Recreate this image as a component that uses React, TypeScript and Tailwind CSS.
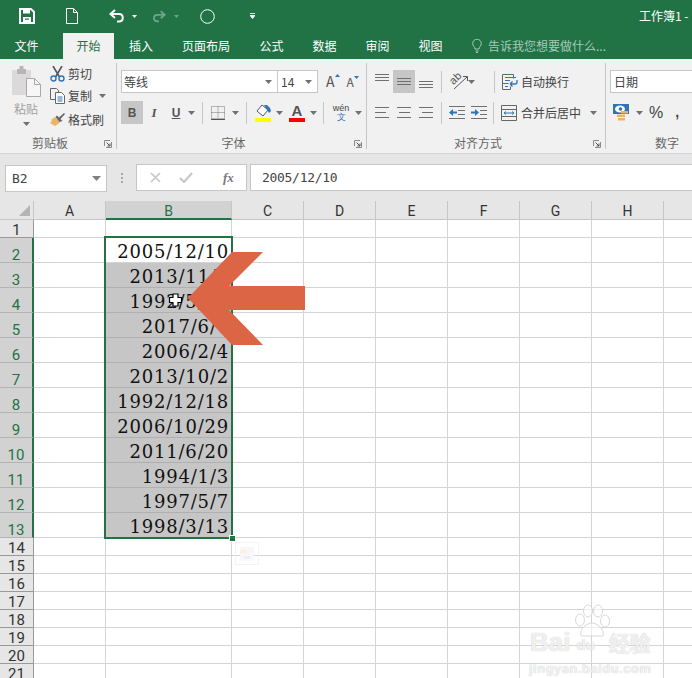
const UI = "font-['Noto_Sans_CJK_SC',sans-serif]";

const rows: { n: number; h: string; date?: string }[] = [
  { n: 1, h: "h-[18px]" },
  { n: 2, h: "h-[25px]", date: "2005/12/10" },
  { n: 3, h: "h-[25px]", date: "2013/11/5" },
  { n: 4, h: "h-[25px]", date: "1992/5/16" },
  { n: 5, h: "h-[25px]", date: "2017/6/7" },
  { n: 6, h: "h-[25px]", date: "2006/2/4" },
  { n: 7, h: "h-[25px]", date: "2013/10/2" },
  { n: 8, h: "h-[25px]", date: "1992/12/18" },
  { n: 9, h: "h-[25px]", date: "2006/10/29" },
  { n: 10, h: "h-[25px]", date: "2011/6/20" },
  { n: 11, h: "h-[25px]", date: "1994/1/3" },
  { n: 12, h: "h-[25px]", date: "1997/5/7" },
  { n: 13, h: "h-[25px]", date: "1998/3/13" },
  ...[14, 15, 16, 17, 18, 19, 20, 21].map((n) => ({ n, h: "h-[18px]" })),
];

// the I column starts on screen but its letter is past the window edge
const otherCols = ["C", "D", "E", "F", "G", "H", ""];

function Caret({ className = "" }: { className?: string }) {
  return (
    <svg width="7" height="4" viewBox="0 0 7 4" className={`shrink-0 ${className}`}>
      <path d="M0 0h7L3.5 4z" fill="#707070" />
    </svg>
  );
}

function Sep({ className = "" }: { className?: string }) {
  return <div className={`w-px h-[22px] shrink-0 bg-[#c6c6c6] ${className}`} />;
}

function GroupLabel({ children, launcher = true }: { children: string; launcher?: boolean }) {
  return (
    <div className={`relative h-[19px] mt-auto mb-[-3px] flex items-center justify-center text-[12px] text-[#666] ${launcher ? "pr-[16px]" : ""}`}>
      {children}
      {launcher && (
        <svg width="8" height="8" viewBox="0 0 8 8" className="absolute right-[4px] top-[7px]">
          <path d="M.5 6V.5H6M7.5 2v5.500H2" stroke="#8a8a8a" fill="none" />
          <path d="M2.500 2.500L6 6M6 3.500V6H3.500" stroke="#555" fill="none" />
        </svg>
      )}
    </div>
  );
}

function LeftAlign({ offset }: { offset: number[] }) {
  return (
    <svg width="15" height="13" viewBox="0 0 15 13">
      <path d={`M${offset[0]} 1.5h14M${offset[1]} 6.5h11M${offset[0]} 11.5h14`} stroke="#707070" />
    </svg>
  );
}

function AlignLines() {
  return (
    <svg width="14" height="7" viewBox="0 0 14 7">
      <path d="M0 .5h14M0 3.500h14M0 6.500h14" stroke="#707070" />
    </svg>
  );
}

function QatBar() {
  return (
    <div className="h-[32px] flex items-center text-white">
      <svg width="16" height="16" viewBox="0 0 16 16" className="ml-[19px]">
        <path d="M1 1h11l3 3v11H1z" fill="none" stroke="#fff" strokeWidth="2" />
        <path d="M4 1h7v4.500H4z" fill="#fff" />
        <path d="M4 9h8v6H4z" fill="#fff" />
        <path d="M6 10.500h4v1.200H6z" fill="#217346" />
      </svg>
      <svg width="12" height="16" viewBox="0 0 12 16" className="ml-[31px]">
        <path d="M.5.500h7l4 4v11H.5zM7.500.500v4h4" fill="none" stroke="#fff" />
      </svg>
      <svg width="16" height="14" viewBox="0 0 16 14" className="ml-[31px]">
        <path d="M6 1L1.500 5 6 9" fill="none" stroke="#fff" strokeWidth="2" />
        <path d="M2 5h8c5 0 5 7.500 0 7.500H8" fill="none" stroke="#fff" strokeWidth="2" />
      </svg>
      <svg width="5" height="3" viewBox="0 0 5 3" className="ml-[7px] mt-[1px]">
        <path d="M0 0h5L2.500 3z" fill="#fff" />
      </svg>
      <svg width="14" height="13" viewBox="0 0 16 14" className="ml-[15px]">
        <path d="M10 1l4.500 4L10 9" fill="none" stroke="#6fa58b" strokeWidth="2" />
        <path d="M14 5H6c-5 0-5 7.500 0 7.500h2" fill="none" stroke="#6fa58b" strokeWidth="2" />
      </svg>
      <svg width="5" height="3" viewBox="0 0 5 3" className="ml-[8px] mt-[1px]">
        <path d="M0 0h5L2.500 3z" fill="#6fa58b" />
      </svg>
      <svg width="15" height="15" viewBox="0 0 15 15" className="ml-[21px]">
        <circle cx="7.500" cy="7.500" r="6.800" fill="none" stroke="#fff" />
      </svg>
      <svg width="5" height="6" viewBox="0 0 5 6" className="ml-[35px]">
        <path d="M0 .5h5M0 2.500h5L2.500 5.500z" stroke="#fff" strokeWidth=".8" fill="#fff" />
      </svg>
      <span className="ml-[384px] text-[12px] whitespace-nowrap">工作簿1 -</span>
    </div>
  );
}

function Tabs() {
  const tabs = [
    ["文件", "w-[63px] pr-[10px]"],
    ["开始", "w-[51px]"],
    ["插入", "w-[54px]"],
    ["页面布局", "w-[76px]"],
    ["公式", "w-[55px]"],
    ["数据", "w-[51px]"],
    ["审阅", "w-[55px]"],
    ["视图", "w-[51px]"],
  ];
  return (
    <div className="h-[27px] flex text-[12px] text-white">
      {tabs.map(([t, w]) => (
        <div
          key={t}
          className={`${w} flex items-center justify-center ${t === "开始" ? "bg-[#f1f1f1] text-[#217346] mt-px" : ""}`}
        >
          {t}
        </div>
      ))}
      <div className="flex items-center ml-[16px] text-[#a6c9b7]">
        <svg width="10" height="14" viewBox="0 0 10 14" className="mr-[6px]">
          <path d="M3 10C3 8 .7 7 .7 4.500a4.300 4.300 0 018.600 0C9.300 7 7 8 7 10z" fill="none" stroke="#a6c9b7" />
          <path d="M3.500 12h3M4 13.500h2" stroke="#a6c9b7" />
        </svg>
        告诉我您想要做什么...
      </div>
    </div>
  );
}

function Clipboard() {
  return (
    <div className="w-[117px] shrink-0 border-r border-[#c6c6c6] flex flex-col my-[4px]">
      <div className="flex">
        <div className="w-[54px] flex flex-col items-center pt-[3px] text-[12px] text-[#a0a0a0] -ml-[1px] -mr-[3px]">
          <svg width="29" height="31" viewBox="0 0 29 31">
            <path d="M1 4h17a1 1 0 011 1v23a1 1 0 01-1 1H1a1 1 0 01-1-1V5a1 1 0 011-1z" fill="#dcd9da" />
            <path d="M5 3h9v5H5z" fill="#b8b5b6" />
            <path d="M7.500 0h4v4h-4z" fill="#b8b5b6" />
            <path d="M14.500 12.500h8l6 6v12h-14z" fill="#f6f6f6" stroke="#a8a8a8" />
            <path d="M22.500 12.500v6h6" fill="none" stroke="#a8a8a8" />
          </svg>
          <span className="mt-[3px] leading-[17px]">粘贴</span>
          <Caret className="mt-[5px]" />
        </div>
        <div className="flex flex-col text-[12px] text-[#444]">
          <div className="h-[21px] flex items-center">
            <svg width="15" height="16" viewBox="0 0 15 16" className="mr-[3px]">
              <path d="M3 0l6.500 11M12 0L5.500 11" stroke="#555" strokeWidth="1.600" />
              <circle cx="3.500" cy="12.500" r="2.500" fill="none" stroke="#2f75b5" strokeWidth="1.400" />
              <circle cx="11.500" cy="12.500" r="2.500" fill="none" stroke="#2f75b5" strokeWidth="1.400" />
            </svg>
            剪切
          </div>
          <div className="h-[24px] flex items-center">
            <svg width="15" height="16" viewBox="0 0 15 16" className="mr-[3px]">
              <path d="M.5.500h6l2 2v9h-8z" fill="#f1f1f1" stroke="#666" />
              <path d="M5.500 4.500h6l3 3v8h-9z" fill="#fff" stroke="#666" />
              <path d="M7.500 9h5M7.500 11h5M7.500 13h5" stroke="#2f75b5" />
            </svg>
            复制
            <Caret className="ml-[7px]" />
          </div>
          <div className="h-[23px] flex items-center">
            <svg width="15" height="14" viewBox="0 0 15 14" className="mr-[3px]">
              <path d="M5 4l5 5-2 2-3 2-5-3 1-1 1-1-1-1z" fill="#e8b567" />
              <path d="M5.500 4L7 2.500l2 2L14 0l1 1-4.500 5 2 2L9.500 9z" fill="#666" />
            </svg>
            格式刷
          </div>
        </div>
      </div>
      <GroupLabel>剪贴板</GroupLabel>
    </div>
  );
}

function FontGroup() {
  return (
    <div className="w-[250px] shrink-0 border-r border-[#c6c6c6] flex flex-col my-[4px]">
      <div className="flex items-center pl-[4px] mt-[7px] h-[23px]">
        <div className="w-[157px] h-[23px] bg-white border border-[#c6c6c6] flex items-center justify-between pl-[2px] pr-[5px] text-[12px] text-[#444]">
          等线
          <Caret />
        </div>
        <div className="w-[40px] h-[23px] bg-white border border-l-0 border-[#c6c6c6] flex items-center justify-between pl-[3px] pr-[5px] text-[12px] text-[#444]">
          14
          <Caret />
        </div>
        <span className="ml-[8px] text-[14px] text-[#555] relative">
          A
          <svg width="5" height="3" viewBox="0 0 5 3" className="absolute -right-[5px] top-[3px]">
            <path d="M0 3L2.500 0 5 3z" fill="#2f75b5" />
          </svg>
        </span>
        <span className="ml-[12px] text-[12px] text-[#555] relative">
          A
          <svg width="5" height="3" viewBox="0 0 5 3" className="absolute -right-[5px] top-[3px]">
            <path d="M0 0h5L2.500 3z" fill="#2f75b5" />
          </svg>
        </span>
      </div>
      <div className="flex items-center pl-[4px] mt-[8px] h-[23px] text-[#555]">
        <div className="w-[22px] h-[23px] bg-[#c6c6c6] flex items-center justify-center font-['Liberation_Sans'] font-bold text-[12px]">B</div>
        <div className="w-[22px] flex justify-center font-['Liberation_Serif'] italic font-bold text-[13px]">I</div>
        <div className="w-[22px] flex justify-center font-['Liberation_Sans'] font-bold text-[12px] underline">U</div>
        <Caret className="ml-[1px]" />
        <Sep className="ml-[7px]" />
        <svg width="14" height="14" viewBox="0 0 14 14" className="ml-[8px]">
          <path d="M.5.500h13v12h-13zM7 .5v12M.5 6.500h13" fill="none" stroke="#777" strokeDasharray="1 1" />
          <path d="M0 13.500h14" stroke="#555" />
        </svg>
        <Caret className="ml-[7px]" />
        <Sep className="ml-[7px]" />
        <svg width="16" height="18" viewBox="0 0 16 18" className="ml-[8px]">
          <path d="M2 7l5-6 6 5-5 6z" fill="#fff" stroke="#555" />
          <path d="M9 1h3l3 3 1 3-2 2z" fill="#2f75b5" />
          <path d="M0 14h16v4H0z" fill="#ffff00" />
        </svg>
        <Caret className="ml-[5px]" />
        <div className="ml-[6px] w-[16px] h-[18px] flex flex-col items-center">
          <span className="text-[15px] leading-[14px] font-bold font-['Liberation_Sans'] text-[#555]">A</span>
          <div className="w-[16px] h-[4px] bg-[#ff0000]" />
        </div>
        <Caret className="ml-[5px]" />
        <Sep className="ml-[6px]" />
        <div className="ml-[8px] w-[18px] flex flex-col items-center font-['Liberation_Sans'] leading-[9px] text-[9px] text-[#444]">
          wén
          <span className="text-[9px] text-[#2f75b5]">文</span>
        </div>
        <Caret className="ml-[5px]" />
      </div>
      <GroupLabel>字体</GroupLabel>
    </div>
  );
}

function AlignGroup() {
  return (
    <div className="w-[239px] shrink-0 border-r border-[#c6c6c6] flex flex-col my-[4px]">
      <div className="flex items-center pl-[4px] mt-[7px] h-[23px]">
        <div className="w-[22px] h-[23px] flex justify-center pt-[4px]">
          <AlignLines />
        </div>
        <div className="w-[22px] h-[23px] bg-[#c6c6c6] flex justify-center items-center">
          <AlignLines />
        </div>
        <div className="w-[22px] h-[23px] flex justify-center pt-[11px]">
          <AlignLines />
        </div>
        <Sep className="ml-[4px]" />
        <div className="relative ml-[7px] w-[19px] h-[16px] shrink-0">
          <span className="absolute left-[0px] -top-[3px] -rotate-45 font-['Liberation_Sans'] text-[11px] leading-[14px] text-[#555]">ab</span>
          <svg width="19" height="16" viewBox="0 0 19 16" className="absolute left-0 top-0">
            <path d="M5 15L18 3M14 2.500h4.500V7" fill="none" stroke="#555" />
          </svg>
        </div>
        <Caret />
        <Sep className="ml-[19px]" />
        <svg width="16" height="16" viewBox="0 0 16 16" className="ml-[7px]">
          <path d="M.5.500h11v4M.5.500v15h8v-3M.5 9.500h6" fill="none" stroke="#666" />
          <path d="M3 3.500h11M3 6.500h5M3 12.500h3" fill="none" stroke="#2f75b5" />
          <path d="M8 10h5a2 2 0 002-2V6M8 10l2.500-2.500M8 10l2.500 2.500" fill="none" stroke="#2f75b5" strokeWidth="1.300" />
        </svg>
        <span className="ml-[3px] text-[12px] text-[#444] whitespace-nowrap">自动换行</span>
      </div>
      <div className="flex items-center pl-[4px] mt-[8px] h-[23px]">
        <div className="w-[22px] flex justify-center">
          <LeftAlign offset={[0, 0]} />
        </div>
        <div className="w-[22px] flex justify-center">
          <LeftAlign offset={[0, 2]} />
        </div>
        <div className="w-[22px] flex justify-center">
          <LeftAlign offset={[0, 3]} />
        </div>
        <Sep className="ml-[4px]" />
        <svg width="16" height="13" viewBox="0 0 16 13" className="ml-[7px]">
          <path d="M0 .5h16M9 4.500h7M9 8.500h7M0 12.500h16" stroke="#707070" />
          <path d="M0 6.500l4-3.500v2.500h4v2H4V10z" fill="#2f75b5" />
        </svg>
        <svg width="16" height="13" viewBox="0 0 16 13" className="ml-[6px]">
          <path d="M0 .5h16M9 4.500h7M9 8.500h7M0 12.500h16" stroke="#707070" />
          <path d="M8 6.500L4 3v2.500H0v2h4V10z" fill="#2f75b5" />
        </svg>
        <Sep className="ml-[6px]" />
        <svg width="16" height="16" viewBox="0 0 16 16" className="ml-[7px]">
          <path d="M.5.500h15v15H.5zM.5 4.500h15M.5 11.500h15" fill="none" stroke="#666" />
          <path d="M3 8h10M3 8l2-1.500M3 8l2 1.500M13 8l-2-1.500M13 8l-2 1.500" stroke="#2f75b5" fill="none" />
        </svg>
        <span className="ml-[4px] text-[12px] text-[#444] whitespace-nowrap">合并后居中</span>
        <Caret className="ml-[9px]" />
      </div>
      <GroupLabel>对齐方式</GroupLabel>
    </div>
  );
}

function NumberGroup() {
  return (
    <div className="w-[122px] shrink-0 flex flex-col my-[4px]">
      <div className="pl-[4px] mt-[7px] h-[23px]">
        <div className="w-[118px] h-[23px] bg-white border border-[#c6c6c6] flex items-center pl-[3px] text-[12px] text-[#444]">日期</div>
      </div>
      <div className="flex items-center pl-[7px] mt-[8px] h-[23px]">
        <svg width="17" height="17" viewBox="0 0 17 17">
          <path d="M0 0h16v10H0z" fill="#2f75b5" />
          <ellipse cx="7" cy="5" rx="5" ry="3.500" fill="#fff" />
          <circle cx="7.500" cy="5" r="1.800" fill="#2f75b5" />
          <path d="M8 7h7v2.500H8zM4 10.500h8V13H4zM5 14h7v2.500H5z" fill="#e8b567" />
        </svg>
        <Caret className="ml-[6px]" />
        <span className="ml-[6px] text-[16px] font-['Liberation_Sans'] text-[#444]">%</span>
        <span className="ml-[12px] text-[14px] font-['Liberation_Sans'] font-bold text-[#444]">,</span>
      </div>
      <GroupLabel launcher={false}>数字</GroupLabel>
    </div>
  );
}

function FormulaBar() {
  return (
    <div className="h-[48px] bg-[#e6e6e6] border-t border-[#d4d4d4] flex pt-[11px] pl-[5px]">
      <div className="w-[102px] h-[27px] bg-white border border-[#c6c6c6] flex items-center justify-between pl-[6px] pr-[5px] text-[13px] text-[#444] font-['DejaVu_Sans_Mono',monospace]">
        B2
        <svg width="9" height="5" viewBox="0 0 9 5">
          <path d="M0 0h9L4.500 5z" fill="#808080" />
        </svg>
      </div>
      <div className="w-[2px] h-[10px] mt-[8px] ml-[14px] border-l-2 border-dotted border-[#a8a8a8]" />
      <div className="ml-[13px] w-[111px] h-[27px] bg-white border border-[#c6c6c6] flex items-center -mt-px">
        <svg width="11" height="11" viewBox="0 0 11 11" className="ml-[13px]">
          <path d="M1 1l9 9M10 1l-9 9" stroke="#c6c6c6" strokeWidth="1.600" />
        </svg>
        <svg width="14" height="11" viewBox="0 0 14 11" className="ml-[18px]">
          <path d="M1 6l4 4 8-9" fill="none" stroke="#c6c6c6" strokeWidth="2" />
        </svg>
        <span className="ml-[30px] font-['Liberation_Serif'] italic font-bold text-[13px] text-[#777]">fx</span>
      </div>
      <div className="ml-[3px] flex-1 h-[27px] bg-white border border-r-0 border-[#c6c6c6] flex items-center pl-[11px] text-[13px] text-[#444] font-['DejaVu_Sans_Mono',monospace] tracking-[-0.3px] -mt-px">
        2005/12/10
      </div>
    </div>
  );
}

function Sheet() {
  return (
    <div className="relative flex-1 overflow-hidden bg-white font-['Roboto',sans-serif]">
      <div className="flex h-[19px] bg-[#e6e6e6] text-[14px] text-[#333]">
        <div className="w-[34px] shrink-0 border-r border-b border-[#c6c6c6] flex items-end justify-end">
          <svg width="11" height="11" viewBox="0 0 11 11" className="mr-[3px] mb-[3px]">
            <path d="M11 0v11H0z" fill="#b4b4b4" />
          </svg>
        </div>
        <div className="w-[72px] shrink-0 border-r border-b border-[#c6c6c6] flex items-center justify-center pt-[3px]">A</div>
        <div className="w-[126px] shrink-0 bg-[#d2d2d2] border-r border-[#c6c6c6] border-b-2 border-b-[#217346] text-[#217346] flex items-center justify-center pt-[3px]">B</div>
        {otherCols.map((c) => (
          <div key={c} className="w-[72px] shrink-0 border-r border-b border-[#c6c6c6] flex items-center justify-center pt-[3px]">{c}</div>
        ))}
      </div>
      {rows.map((r) => {
        const picked = r.n >= 2 && r.n <= 13;
        return (
          <div key={r.n} className={`flex ${r.h}`}>
            <div
              className={`w-[34px] shrink-0 flex items-end justify-center text-[15px] leading-[14px] border-b ${
                picked
                  ? "bg-[#d2d2d2] text-[#217346] border-r-2 border-r-[#217346] border-b-[#b4b4b4]"
                  : "bg-[#e6e6e6] text-[#333] border-r border-r-[#9a9a9a] border-b-[#9a9a9a]"
              }`}
            >
              {r.n}
            </div>
            <div className="w-[72px] shrink-0 border-r border-b border-[#d4d4d4]" />
            <div
              className={`w-[126px] shrink-0 border-r border-b flex items-center justify-end pr-[2px] pt-[2px] font-['DejaVu_Serif',serif] text-[18px] tracking-[0.8px] text-[#111] ${
                picked && r.n > 2 ? "bg-[#c6c6c6] border-[#b0b0b0]" : "border-[#d4d4d4]"
              }`}
            >
              {r.date}
            </div>
            {otherCols.map((c) => (
              <div key={c} className="w-[72px] shrink-0 border-r border-b border-[#d4d4d4]" />
            ))}
          </div>
        );
      })}

      {/* selection box */}
      <div className="absolute left-[104px] top-[35px] w-[129px] h-[303px] border-2 border-[#217346] pointer-events-none" />
      <div className="absolute left-[229px] top-[334px] w-[5px] h-[5px] bg-[#217346] border border-white box-content" />

      {/* quick analysis button */}
      <div className="absolute left-[235px] top-[341px] w-[24px] h-[23px] border border-[#f4f4f4] flex items-center justify-center">
        <svg width="14" height="14" viewBox="0 0 14 14">
          <path d="M0 0h14v14H0z" fill="#f8f8f8" />
          <path d="M0 3h7v3H0z" fill="#f8f0e0" />
          <path d="M4 9h6v3H4z" fill="#e8f0f8" />
        </svg>
      </div>

      {/* arrow annotation */}
      <svg width="692" height="477" viewBox="0 201 692 477" className="absolute left-0 top-0 pointer-events-none">
        <path d="M188 298L232 252H263L229 286H305V310H229L263 345H232Z" fill="#db6545" />
        <path
          d="M173 294h5v3.500h3.500v5H178V306h-5v-3.500h-3.500v-5h3.500z"
          fill="#fff"
          stroke="#000"
          strokeWidth="1.200"
        />
      </svg>

      {/* watermark */}
      <div className="absolute left-[530px] top-[403px] w-[160px] pointer-events-none text-[#ffffffcc] [text-shadow:0_0_1px_#b8b8b8]">
        <svg width="38" height="36" viewBox="0 0 38 36" className="absolute left-[43px] top-[0px]">
          <g fill="#ffffff90" stroke="#d8d8d8">
            <ellipse cx="7" cy="16" rx="4.500" ry="6" />
            <ellipse cx="15" cy="7" rx="4.500" ry="6" />
            <ellipse cx="25" cy="7" rx="4.500" ry="6" />
            <ellipse cx="32" cy="17" rx="4.500" ry="6" />
            <path d="M8 32c-2-8 7-13 11-13s13 5 11 13z" />
          </g>
        </svg>
        <div className="flex items-center font-['Liberation_Sans'] font-bold text-[26px] leading-[26px] pt-[22px]">
          <span>Bai</span>
          <span className="ml-[6px] text-[15px] mt-[6px]">du</span>
          <span className={`ml-[14px] text-[21px] ${UI}`}>经验</span>
        </div>
        <div className="font-['Liberation_Sans'] font-bold text-[13px] leading-[16px] mt-[3px] tracking-[.5px] -ml-[1px]">jingyan.baidu.com</div>
      </div>
    </div>
  );
}

export default function App() {
  return (
    <div className={`w-[692px] h-[678px] overflow-hidden flex flex-col ${UI}`}>
      <div className="bg-[#217346]">
        <QatBar />
        <Tabs />
      </div>
      <div className="h-[94px] bg-[#f1f1f1] flex">
        <Clipboard />
        <FontGroup />
        <AlignGroup />
        <NumberGroup />
      </div>
      <FormulaBar />
      <Sheet />
    </div>
  );
}
